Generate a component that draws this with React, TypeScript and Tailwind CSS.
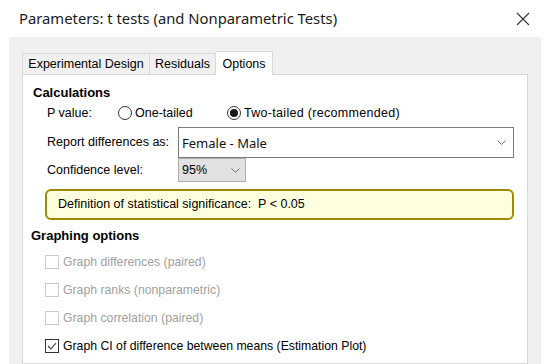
import React from "react";

const body = { fontFamily: '"Liberation Sans", Arial, sans-serif' };

function Radio({ checked }: { checked?: boolean }) {
  return (
    <span className="w-[14px] h-[14px] rounded-full border border-[#333333] bg-white flex items-center justify-center shrink-0">
      {checked && <span className="w-[8px] h-[8px] rounded-full bg-[#1a1a1a]" />}
    </span>
  );
}

function Chevron() {
  return (
    <svg width="9" height="5" viewBox="0 0 9 5" className="shrink-0">
      <path d="M0.5 0.5 L4.5 4.5 L8.5 0.5" fill="none" stroke="#666" strokeWidth="0.9" />
    </svg>
  );
}

function Check({ label, checked, disabled }: { label: string; checked?: boolean; disabled?: boolean }) {
  return (
    <div className="h-[28px] flex items-center pl-[22px]">
      <span
        className={
          "w-[14px] h-[14px] border bg-white flex items-center justify-center shrink-0 " +
          (disabled ? "border-[#cccccc]" : "border-[#333333]")
        }
      >
        {checked && (
          <svg width="10" height="8" viewBox="0 0 10 8">
            <path d="M1 4 L3.8 6.8 L9 1.2" fill="none" stroke="#444" strokeWidth="1.2" />
          </svg>
        )}
      </span>
      <span className={"ml-[4px] text-[12.25px] " + (disabled ? "text-[#a0a0a0]" : "text-black")}>{label}</span>
    </div>
  );
}

export default function App() {
  return (
    <div className="w-[549px] h-[364px] overflow-hidden bg-white flex flex-col" style={body}>
      {/* Title bar */}
      <div className="h-[37px] shrink-0 flex items-center justify-between pl-[19px] pr-[19px] bg-white">
        <span
          className="text-[14.8px] text-[#1a1a1a]"
          style={{ fontFamily: '"Noto Sans", "Open Sans", sans-serif' }}
        >
          Parameters: t tests (and Nonparametric Tests)
        </span>
        <svg width="14" height="14" viewBox="0 0 14 14">
          <path d="M1 1 L13 13 M13 1 L1 13" stroke="#333" strokeWidth="1.1" fill="none" />
        </svg>
      </div>

      {/* Body */}
      <div className="flex-1 flex min-h-0">
        <div className="w-[9px] bg-white shrink-0" />
        <div className="flex-1 bg-[#f0f0f0] pl-[13px] pr-[13px] pt-[14px] flex flex-col min-h-0">
          {/* Tabs */}
          <div className="h-[23px] flex items-end shrink-0 relative z-10">
            <div className="h-[21px] w-[128px] border border-b-0 border-[#d9d9d9] bg-[#f0f0f0] flex items-center justify-center text-[12.5px] text-black">
              Experimental Design
            </div>
            <div className="h-[21px] w-[66px] border border-l-0 border-b-0 border-[#d9d9d9] bg-[#f0f0f0] flex items-center justify-center text-[12.5px] text-black">
              Residuals
            </div>
            <div className="h-[24px] w-[57px] -mb-[1px] border border-l-0 border-b-0 border-[#d9d9d9] bg-white flex items-start justify-center pt-[3px] text-[12.5px] text-black">
              Options
            </div>
          </div>

          {/* Panel */}
          <div className="flex-1 border border-[#d9d9d9] bg-white flex flex-col pt-[8px]">
            <div className="h-[20px] flex items-center pl-[10px] text-[13px] font-bold text-black">Calculations</div>

            <div className="h-[20px] flex items-center pl-[24px] text-[12.5px] text-black">
              <span className="w-[71px]">P value:</span>
              <div className="w-[109px] flex items-center">
                <Radio />
                <span className="ml-[3px]">One-tailed</span>
              </div>
              <div className="flex items-center">
                <Radio checked />
                <span className="ml-[3px] tracking-[0.3px]">Two-tailed (recommended)</span>
              </div>
            </div>

            <div className="mt-[4px] h-[31px] flex items-center pl-[24px] text-[12.5px] text-black">
              <span className="w-[131px]">Report differences as:</span>
              <div className="w-[336px] h-[31px] border border-[#7a7a7a] bg-white flex items-center justify-between pl-[3px] pr-[7px]">
                <span
                  className="text-[13px] pt-[2px] text-[#111]"
                  style={{ fontFamily: '"Noto Sans", "Open Sans", sans-serif' }}
                >
                  Female - Male
                </span>
                <Chevron />
              </div>
            </div>

            <div className="h-[24px] flex items-center pl-[24px] text-[12.5px] text-black">
              <span className="w-[131px]">Confidence level:</span>
              <div className="w-[68px] h-[24px] border border-[#adadad] bg-[#e1e1e1] flex items-center justify-between pl-[3px] pr-[5px]">
                <span>95%</span>
                <Chevron />
              </div>
            </div>

            <div className="mt-[7px] ml-[22px] w-[469px] h-[31px] border-2 border-[#a08a00] rounded-[6px] bg-[#ffffdf] flex items-center pl-[11px] text-[12.5px] text-black whitespace-pre">
              {"Definition of statistical significance:  P < 0.05"}
            </div>

            <div className="mt-[6px] h-[20px] flex items-center pl-[8px] text-[13px] font-bold text-black">
              Graphing options
            </div>

            <div className="mt-[2px] flex flex-col">
              <Check label="Graph differences (paired)" disabled />
              <Check label="Graph ranks (nonparametric)" disabled />
              <Check label="Graph correlation (paired)" disabled />
              <Check label="Graph CI of difference between means (Estimation Plot)" checked />
            </div>
          </div>
        </div>
        <div className="w-[8px] bg-white shrink-0" />
      </div>
    </div>
  );
}
